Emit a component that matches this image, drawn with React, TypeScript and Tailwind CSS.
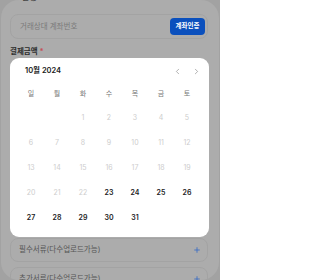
import { ChevronLeft, ChevronRight, Plus } from "lucide-react";

const WEEKDAYS = ["일", "월", "화", "수", "목", "금", "토"];

// October 2024 starts on a Tuesday
const DAYS: (number | null)[] = [null, null, ...Array.from({ length: 31 }, (_, i) => i + 1)];

const FIRST_SELECTABLE = 23;

function Calendar() {
  return (
    <div className="mt-[1px] h-[179px] w-[199px] rounded-[9px] bg-white">
      {/* Header */}
      <div className="flex h-[26px] items-center justify-between pl-[15px] pr-[3px]">
        <span className="text-[7.5px] font-semibold leading-none text-[#222]">10월 2024</span>
        <div className="flex items-center">
          <span className="flex w-[19px] justify-center text-[#777]">
            <ChevronLeft className="h-[9px] w-[9px]" strokeWidth={1.5} />
          </span>
          <span className="flex w-[19px] justify-center text-[#777]">
            <ChevronRight className="h-[9px] w-[9px]" strokeWidth={1.5} />
          </span>
        </div>
      </div>

      {/* Weekdays */}
      <div className="ml-[8px] grid h-[18px] w-[182px] grid-cols-7 items-center">
        {WEEKDAYS.map((d) => (
          <span key={d} className="text-center text-[7px] leading-none text-[#777]">
            {d}
          </span>
        ))}
      </div>

      {/* Dates */}
      <div className="ml-[8px] mt-[3px] grid w-[182px] grid-cols-7">
        {DAYS.map((d, i) => (
          <div key={i} className="flex h-[25px] items-center justify-center">
            {d !== null && (
              <span
                className={
                  d >= FIRST_SELECTABLE
                    ? "text-[7px] font-semibold leading-none text-[#222]"
                    : "text-[7px] leading-none text-[#cdcdcd]"
                }
              >
                {d}
              </span>
            )}
          </div>
        ))}
      </div>
    </div>
  );
}

function UploadField({ label, className = "" }: { label: string; className?: string }) {
  return (
    <div
      className={`flex h-[24px] w-[198px] items-center justify-between rounded-[8px] border border-[#a3a3a3] pl-[8px] pr-[6px] ${className}`}
    >
      <span className="text-[7.5px] leading-none text-[#555]">{label}</span>
      <Plus className="h-[8px] w-[8px] text-[#3b6dc4]" strokeWidth={2.6} />
    </div>
  );
}

export default function App() {
  return (
    <div
      className="h-[280px] w-[220px] overflow-hidden bg-[#a2a2a2]"
      style={{ fontFamily: 'Inter, "Noto Sans CJK KR", sans-serif' }}
    >
      <div className="mx-[1px] flex h-[280px] flex-col overflow-hidden rounded-[18px] bg-[#acacac] px-[9px]">
        {/* cut-off label above */}
        <div className="h-[14px] shrink-0">
          <div className="-mt-[8px] ml-[12px] text-[8px] font-semibold leading-[10px] text-[#444]">은행</div>
        </div>

        {/* Account number input */}
        <div className="flex h-[25px] w-[198px] shrink-0 items-center justify-between rounded-[8px] border border-[#a3a3a3] pl-[9px] pr-[2px]">
          <span className="text-[7.5px] leading-none text-[#7a7a7a]">거래상대 계좌번호</span>
          <button className="flex h-[17px] w-[35px] items-center justify-center rounded-[4px] bg-[#0b50bd] text-[6.5px] font-semibold leading-none text-white">
            계좌인증
          </button>
        </div>

        {/* Amount label */}
        <div className="mt-[8px] flex h-[10px] shrink-0 items-center gap-[2px] text-[7.5px] font-bold leading-none text-[#2d2d2d]">
          결제금액<span className="text-[#c5505a]">*</span>
        </div>

        <div className="shrink-0">
          <Calendar />
        </div>

        <UploadField label="필수서류(다수업로드가능)" className="mt-[1px] shrink-0" />
        <UploadField label="추가서류(다수업로드가능)" className="mt-[5px] shrink-0" />
      </div>
    </div>
  );
}
